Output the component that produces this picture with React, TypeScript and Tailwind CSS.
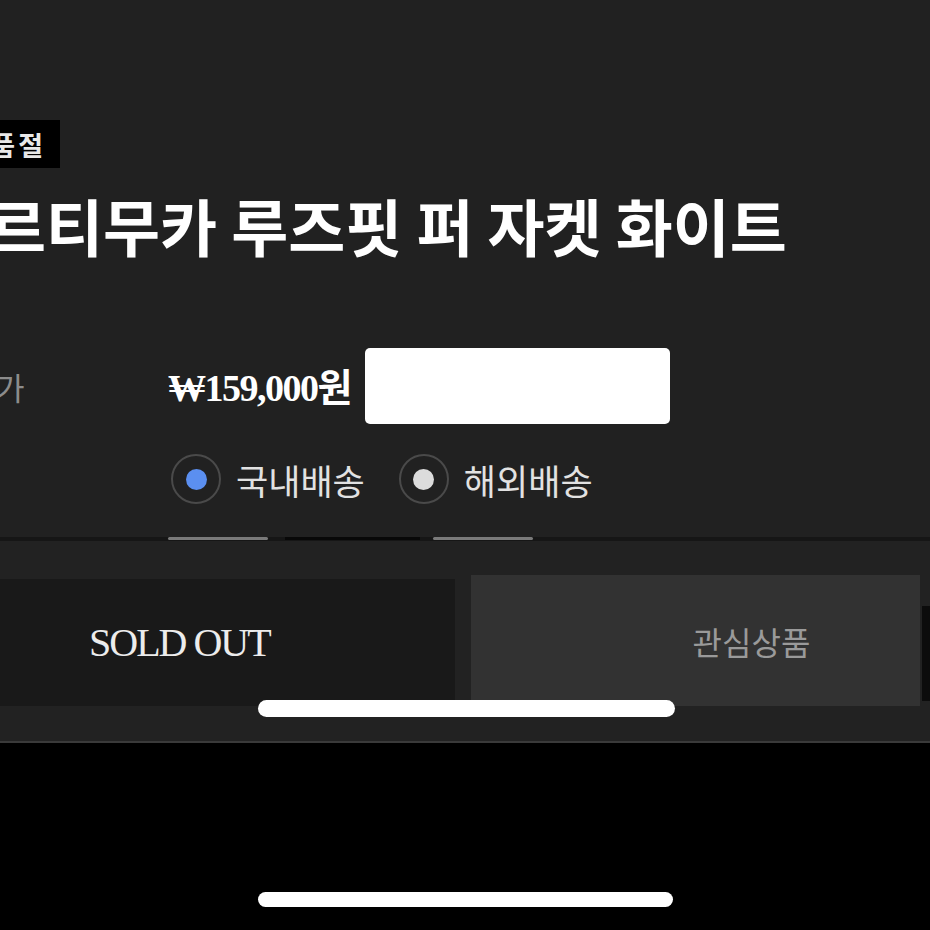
const sans = { fontFamily: '"Noto Sans CJK KR", "Noto Sans", sans-serif' };
const serif = { fontFamily: '"Liberation Serif", "Noto Sans CJK KR", serif' };

function Radio({ label, dot }: { label: string; dot: string }) {
  return (
    <div className="flex items-center gap-[15px]">
      <span className="flex h-[50px] w-[50px] items-center justify-center rounded-full border-2 border-[#4a4a4a]">
        <span className={`h-[21px] w-[21px] rounded-full ${dot}`} />
      </span>
      <span className="text-[35px] leading-none text-[#e2e2e2]" style={sans}>
        {label}
      </span>
    </div>
  );
}

export default function App() {
  return (
    <div className="relative flex h-[930px] w-[930px] flex-col overflow-hidden bg-black">
      {/* product info */}
      <div className="flex h-[537px] flex-col bg-[#212121] pt-[120px]">
        <div className="flex h-[48px] w-[60px] items-center justify-end overflow-hidden bg-black pr-[14px]">
          <span className="whitespace-nowrap text-[27px] font-bold leading-none tracking-[3px] text-[#e8e8e8]" style={sans}>
            품절
          </span>
        </div>

        <h1
          className="ml-[-11px] mt-[26px] whitespace-nowrap text-[62px] font-bold leading-none text-white"
          style={sans}
        >
          르티무카 루즈핏 퍼 자켓 화이트
        </h1>

        <div className="mt-[92px] flex items-center">
          <span className="ml-[-4px] w-[172px] text-[31px] leading-none text-[#8c8c8c]" style={sans}>
            가
          </span>
          <span className="w-[197px] whitespace-nowrap text-[38px] font-bold leading-none tracking-[-1.5px] text-white" style={serif}>
            ₩159,000<span style={sans} className="tracking-normal">원</span>
          </span>
          <div className="h-[76px] w-[305px] rounded-[5px] bg-white" />
        </div>

        <div className="ml-[171px] mt-[30px] flex gap-[34px]">
          <Radio label="국내배송" dot="bg-[#5b8ff0]" />
          <Radio label="해외배송" dot="bg-[#dcdcdc]" />
        </div>
      </div>

      {/* bottom bar */}
      <div className="flex h-[4px] bg-[#161616]">
        <div className="ml-[168px] h-[3px] w-[100px] rounded-full bg-[#7a7a7a]" />
        <div className="ml-[17px] h-[3px] w-[135px] bg-[#080808]" />
        <div className="ml-[13px] h-[3px] w-[100px] rounded-full bg-[#7a7a7a]" />
      </div>
      <div className="flex h-[200px] flex-col bg-[#222222]">
        <div className="mt-[34px] flex h-[131px] items-end">
          <div className="flex h-[127px] w-[456px] items-center bg-[#191919] pl-[89px]">
            <span className="text-[40px] leading-none tracking-[-2px] text-[#ececec]" style={serif}>
              SOLD OUT
            </span>
          </div>
          <div className="ml-[16px] flex h-[131px] w-[450px] items-center justify-center bg-[#323232] pl-[112px]">
            <span className="text-[32px] leading-none text-[#9a9a9a]" style={sans}>
              관심상품
            </span>
          </div>
          <div className="mb-[5px] ml-[2px] h-[95px] w-[8px] bg-[#0c0c0c]" />
        </div>
      </div>
      <div className="h-[2px] bg-[#3a3a3a]" />

      <div className="absolute left-[258px] top-[700px] h-[17px] w-[417px] rounded-full bg-white" />
      <div className="absolute left-[258px] top-[892px] h-[15px] w-[415px] rounded-full bg-white" />
    </div>
  );
}
